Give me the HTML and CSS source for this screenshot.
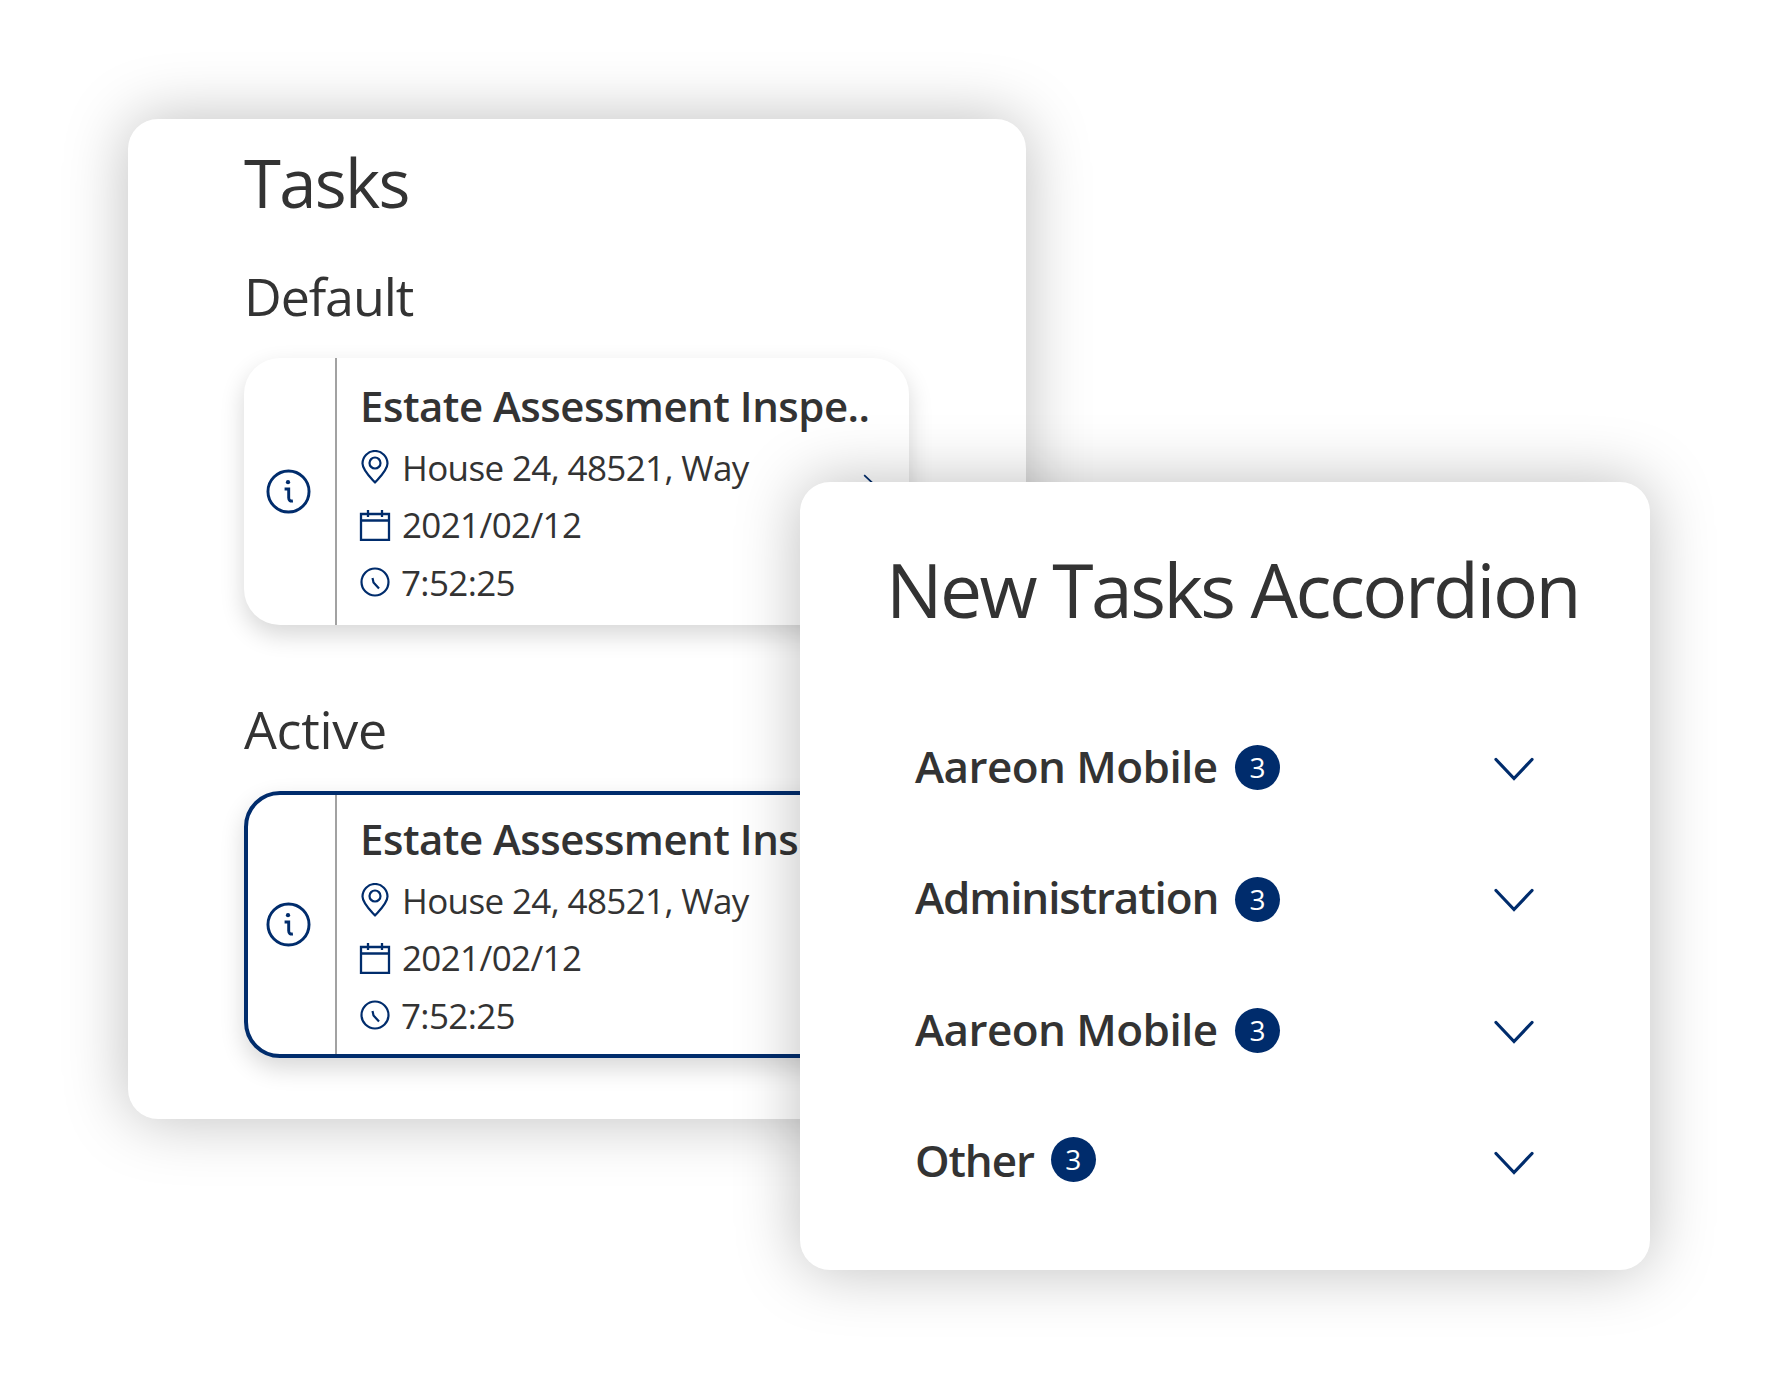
FILE: index.html
```html
<!DOCTYPE html>
<html lang="en">
<head>
<meta charset="utf-8">
<title>Tasks</title>
<link rel="stylesheet" href="styles.css">
</head>
<body>
<svg class="defs" width="0" height="0" aria-hidden="true">
  <symbol id="i-info" viewBox="0 0 46 46"><circle cx="23" cy="23" r="21" fill="none" stroke="currentColor" stroke-width="3"/><circle cx="22.500" cy="13.500" r="2.200" fill="currentColor"/><path d="M19 20.500h4.200v9q0 3.800 4.300 3.200" fill="none" stroke="currentColor" stroke-width="3"/></symbol>
  <symbol id="i-pin" viewBox="0 0 30 34"><path d="M15 32.500C10 27 2.500 20 2.500 13.500a12.500 12.500 0 0 1 25 0C27.500 20 20 27 15 32.500Z" fill="none" stroke="currentColor" stroke-width="2.200" stroke-linejoin="round"/><circle cx="15" cy="13" r="5.500" fill="none" stroke="currentColor" stroke-width="2.200"/></symbol>
  <symbol id="i-cal" viewBox="0 0 32 32"><path d="M2 5h28v26H2zM2 11.500h28M9 1v7M23 1v7" fill="none" stroke="currentColor" stroke-width="2.300"/></symbol>
  <symbol id="i-clock" viewBox="0 0 30 30"><circle cx="15" cy="15" r="13.500" fill="none" stroke="currentColor" stroke-width="2.200"/><path d="M12.500 11l1 4.500 5.500 6" fill="none" stroke="currentColor" stroke-width="2.200"/></symbol>
  <symbol id="i-down" viewBox="0 0 40 24"><path d="M2 2.500L20 21.500 38 2.500" fill="none" stroke="currentColor" stroke-width="3.200" stroke-linecap="round"/></symbol>
  <symbol id="i-right" viewBox="0 0 24 40"><path d="M2 1.500L22 20 2 38.500" fill="none" stroke="currentColor" stroke-width="3"/></symbol>
</svg>
<main class="stage">
  <section class="panel panel-tasks">
    <h1 class="title">Tasks</h1>
    <h2 class="section-title section-default">Default</h2>
    <article class="task">
      <div class="task-info"><svg class="icon-info"><use href="#i-info"/></svg></div>
      <div class="task-body">
        <h3 class="task-name">Estate Assessment Inspe..</h3>
        <div class="task-rows">
          <p class="task-row"><svg class="icon-row icon-pin"><use href="#i-pin"/></svg><span class="gap-wide">House 24, 48521, Way</span></p>
          <p class="task-row"><svg class="icon-row"><use href="#i-cal"/></svg><span class="gap-wide">2021/02/12</span></p>
          <p class="task-row"><svg class="icon-row icon-clock"><use href="#i-clock"/></svg><span>7:52:25</span></p>
        </div>
      </div>
      <svg class="task-chevron"><use href="#i-right"/></svg>
    </article>
    <h2 class="section-title section-active">Active</h2>
    <article class="task task-active">
      <div class="task-info"><svg class="icon-info"><use href="#i-info"/></svg></div>
      <div class="task-body">
        <h3 class="task-name">Estate Assessment Inspe..</h3>
        <div class="task-rows">
          <p class="task-row"><svg class="icon-row icon-pin"><use href="#i-pin"/></svg><span class="gap-wide">House 24, 48521, Way</span></p>
          <p class="task-row"><svg class="icon-row"><use href="#i-cal"/></svg><span class="gap-wide">2021/02/12</span></p>
          <p class="task-row"><svg class="icon-row icon-clock"><use href="#i-clock"/></svg><span>7:52:25</span></p>
        </div>
      </div>
      <svg class="task-chevron"><use href="#i-right"/></svg>
    </article>
  </section>
  <section class="panel panel-accordion">
    <h1 class="accordion-title">New Tasks Accordion</h1>
    <ul class="accordion">
      <li class="accordion-item"><span class="accordion-label accordion-label-wide accordion-label-loose">Aareon Mobile</span><span class="badge">3</span><svg class="chevron-down"><use href="#i-down"/></svg></li>
      <li class="accordion-item"><span class="accordion-label accordion-label-wide">Administration</span><span class="badge">3</span><svg class="chevron-down"><use href="#i-down"/></svg></li>
      <li class="accordion-item"><span class="accordion-label accordion-label-wide accordion-label-loose">Aareon Mobile</span><span class="badge">3</span><svg class="chevron-down"><use href="#i-down"/></svg></li>
      <li class="accordion-item"><span class="accordion-label">Other</span><span class="badge badge-raised">3</span><svg class="chevron-down"><use href="#i-down"/></svg></li>
    </ul>
  </section>
</main>
</body>
</html>
```
FILE: styles.css
```css
* { box-sizing: border-box; }
html, body { margin: 0; padding: 0; background: #fff; }
body { font-family: "Open Sans", "Noto Sans", sans-serif; color: #333; overflow: hidden; }
.defs { position: absolute; }
.stage { position: relative; width: 1778px; height: 1390px; overflow: hidden; }
.panel { position: absolute; background: #fff; border-radius: 30px; box-shadow: 0 0 64px rgba(0,0,0,.26); }
.panel-tasks { left: 128px; top: 119px; width: 898px; height: 1000px; padding: 0 117px 0 116px; }
.panel-accordion { left: 800px; top: 482px; width: 850px; height: 788px; padding: 0 116px 0 115px; }
.title { margin: 18px 0 0; font-size: 67px; font-weight: 400; line-height: 90px; height: 90px; letter-spacing: -1.7px; }
.section-title { margin: 0; font-size: 52px; font-weight: 400; line-height: 64px; }
.section-default { margin-top: 37px; letter-spacing: -1.1px; }
.section-active { margin-top: 72px; letter-spacing: -.3px; }
.task { position: relative; display: flex; width: 665px; height: 267px; background: #fff; border-radius: 36px; box-shadow: 0 10px 24px rgba(0,0,0,.16); overflow: hidden; }
.section-default + .task { margin-top: 30px; }
.section-active + .task { margin-top: 30px; }
.task-active { border: 4px solid #002c6c; }
.task-info { flex: none; width: 93px; padding-right: 2px; display: flex; align-items: center; justify-content: center; border-right: 2px solid #a2a2a2; color: #002c6c; }
.task-active .task-info { width: 89px; padding-right: 6px; }
.icon-info { width: 45px; height: 45px; }
.task-body { flex: 1; min-width: 0; padding: 18px 0 0 23px; white-space: nowrap; }
.task-active .task-body { padding-top: 14px; }
.task-name { margin: 0; font-size: 42px; font-weight: 600; line-height: 60px; letter-spacing: -.5px; }
.task-rows { margin: 3px 0 0 -1px; }
.task-row { margin: 0; height: 57.300px; display: flex; align-items: center; font-size: 35px; letter-spacing: -.64px; }
.icon-row { flex: none; width: 32px; height: 32px; color: #002c6c; margin-right: 10px; }
.icon-row.icon-pin { height: 34px; transform: translateY(-1px); }
.icon-row.icon-clock { height: 30px; }
.gap-wide { margin-left: 1px; }
.task-chevron { position: absolute; right: 32px; top: 113px; width: 14px; height: 30px; color: #002c6c; }
.accordion-title { margin: 0 0 0 -29px; font-size: 75px; font-weight: 400; line-height: 100px; letter-spacing: -2.5px; padding-top: 57px; box-sizing: content-box; white-space: nowrap; }
.accordion { list-style: none; margin: 63px 0 0; padding: 0; }
.accordion-item { display: flex; align-items: center; height: 131.500px; font-size: 44px; font-weight: 600; letter-spacing: -1.1px; }
.accordion-label { line-height: 60px; margin-bottom: 4px; }
.accordion-label-wide { min-width: 304px; }
.accordion-label-loose { letter-spacing: -.56px; }
.badge { flex: none; width: 45px; height: 45px; margin-left: 16px; border-radius: 50%; background: #002c6c; color: #fff; font-size: 28px; font-weight: 400; line-height: 45px; text-align: center; letter-spacing: 0; }
.badge-raised { margin-left: 17px; margin-bottom: 6px; }
.chevron-down { margin-left: auto; margin-top: 2px; width: 40px; height: 24px; color: #002c6c; }
```
